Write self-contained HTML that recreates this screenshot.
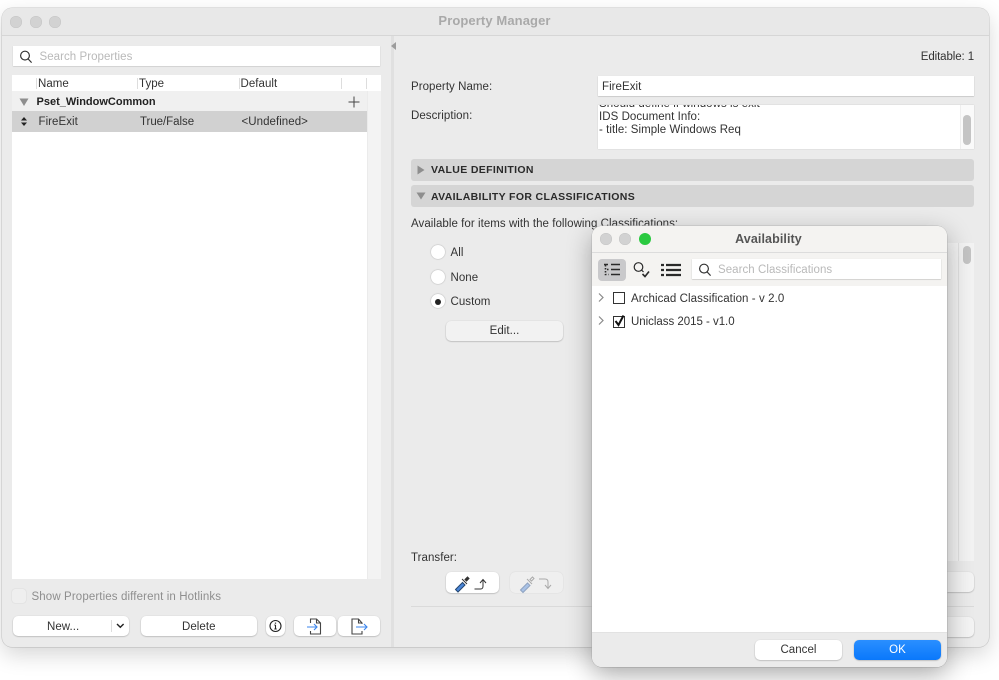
<!DOCTYPE html>
<html><head><meta charset="utf-8"><style>
html,body{margin:0;padding:0;background:#fff}
body{width:999px;height:680px;position:relative;overflow:hidden;font-family:"Liberation Sans",sans-serif;font-size:11.5px;color:#333;letter-spacing:.05px;filter:blur(.35px)}
div,span{position:absolute;box-sizing:border-box}
svg{position:absolute;overflow:visible}
.t{white-space:nowrap;line-height:14px;margin-top:1px}
.btn{background:#fff;border-radius:5px;box-shadow:0 .5px 1.5px rgba(0,0,0,.3);text-align:center;line-height:22px}
.dot{width:12px;height:12px;border-radius:50%;background:#d2d2d2;box-shadow:inset 0 0 0 .5px #c4c4c4}
.bar{background:#d5d5d5;border-radius:3px;left:411px;width:563px;height:22px}
.bt{font-weight:bold;left:431px;white-space:nowrap;line-height:14px;letter-spacing:.35px;font-size:10.5px;color:#2a2a2a}
.rad{width:14px;height:14px;border-radius:50%;background:#fff;left:431px;box-shadow:0 0 1.5px rgba(0,0,0,.35)}
</style></head><body>
<!-- main window -->
<div style="left:2px;top:8px;width:987px;height:639px;background:#ebebeb;border-radius:10px;box-shadow:0 8px 22px rgba(0,0,0,.16),0 0 0 .5px #cfcfcf"></div>
<div style="left:2px;top:8px;width:987px;height:28px;background:#e8e8e8;border-radius:10px 10px 0 0;border-bottom:1px solid #d6d6d6"></div>
<div class="dot" style="left:10px;top:16px"></div><div class="dot" style="left:30px;top:16px"></div><div class="dot" style="left:49px;top:16px"></div>
<div class="t" style="left:0;width:989px;text-align:center;top:13px;font-weight:bold;font-size:13px;color:#a9a9a9;letter-spacing:.1px">Property Manager</div>

<!-- left panel -->
<div style="left:13px;top:46px;width:367px;height:20px;background:#fff;box-shadow:0 .5px 1px rgba(0,0,0,.2)"></div>
<svg style="left:19px;top:50px" width="14" height="14" fill="none" stroke="#333" stroke-width="1.2"><circle cx="6" cy="5.6" r="4.4"/><path d="M9.2 9l3.400 3.600"/></svg>
<div class="t" style="left:39.500px;top:49px;color:#b9b9b9">Search Properties</div>

<div style="left:12px;top:75px;width:369px;height:16px;background:#fff"></div>
<div style="left:36px;top:78px;width:1px;height:11px;background:#ddd"></div>
<div style="left:137px;top:78px;width:1px;height:11px;background:#ddd"></div>
<div style="left:239px;top:78px;width:1px;height:11px;background:#ddd"></div>
<div style="left:341px;top:78px;width:1px;height:11px;background:#ddd"></div>
<div style="left:366px;top:78px;width:1px;height:11px;background:#ddd"></div>
<div class="t" style="left:38px;top:76px">Name</div>
<div class="t" style="left:139px;top:76px">Type</div>
<div class="t" style="left:240.500px;top:76px">Default</div>

<div style="left:12px;top:91px;width:355px;height:488px;background:#fff"></div>
<div style="left:368px;top:91px;width:13px;height:488px;background:#f3f3f3"></div>
<div style="left:12px;top:91px;width:355px;height:20px;background:#f0f0f0"></div>
<svg style="left:19px;top:98px" width="11" height="9"><path d="M0.500 0.500H9.500L5 8z" fill="#8e8e8e"/></svg>
<div style="left:36.500px;top:95px;font-weight:bold;font-size:11px;color:#222;letter-spacing:0;white-space:nowrap;line-height:14px">Pset_WindowCommon</div>
<svg style="left:348px;top:96px" width="12" height="12" stroke="#444" stroke-width="1"><path d="M6 .5v11M.5 6h11"/></svg>
<div style="left:12px;top:111px;width:355px;height:21px;background:#d1d1d1"></div>
<svg style="left:20px;top:117px" width="8" height="9" fill="#222"><path d="M4 0L7 3.500H1zM4 9L1 5.500H7z"/></svg>
<div class="t" style="left:38.500px;top:114px">FireExit</div>
<div class="t" style="left:140px;top:114px;letter-spacing:-.05px">True/False</div>
<div class="t" style="left:241.500px;top:114px">&lt;Undefined&gt;</div>

<div style="left:12px;top:589px;width:14px;height:14px;background:#efefef;border-radius:3px;box-shadow:0 0 1px rgba(0,0,0,.2)"></div>
<div class="t" style="left:31.500px;top:589px;color:#8e8e8e;letter-spacing:.12px">Show Properties different in Hotlinks</div>

<div class="btn" style="left:13px;top:616px;width:116px;height:20px"></div>
<div class="t" style="left:47px;top:619px">New...</div>
<div style="left:111px;top:620px;width:1px;height:12px;background:#ddd"></div>
<svg style="left:116px;top:623px" width="9" height="6" fill="none" stroke="#222" stroke-width="1.400"><path d="M1 1l3.300 3.300L7.600 1"/></svg>
<div class="btn" style="left:141px;top:616px;width:116px;height:20px"></div>
<div class="t" style="left:182px;top:619px">Delete</div>
<div class="btn" style="left:266px;top:616px;width:19px;height:20px;border-radius:6px"></div>
<svg style="left:269px;top:619px" width="14" height="14" fill="none" stroke="#222" stroke-width="1.100"><circle cx="6.500" cy="7" r="5.500"/><path d="M6.500 6v4M5.300 10h2.400M5.300 6h1.200" /><path d="M6.500 3.600v1.100" stroke-width="1.300"/></svg>
<div class="btn" style="left:294px;top:616px;width:42px;height:20px"></div>
<svg style="left:307px;top:618px" width="18" height="17" fill="none" stroke="#444" stroke-width="1.100"><path d="M3.500 5V1h6l4 4v11H3.500v-3M9.500 1v4h4"/><path d="M0 9h10M7 6l3 3-3 3" stroke="#3b86ee"/></svg>
<div class="btn" style="left:338px;top:616px;width:42px;height:20px"></div>
<svg style="left:351px;top:618px" width="18" height="17" fill="none" stroke="#444" stroke-width="1.100"><path d="M11 6V5L7.500 1H1v15h10v-3M7.500 1v4H11"/><path d="M5 9h11M13 6l3 3-3 3" stroke="#3b86ee"/></svg>

<!-- divider -->
<div style="left:391px;top:36px;width:3px;height:611px;background:#e0e0e0"></div>
<svg style="left:390px;top:42px" width="6" height="9"><path d="M6 0v8L1 4z" fill="#9c9c9c"/></svg>

<!-- right panel -->
<div class="t" style="right:25px;top:49px;letter-spacing:-.1px">Editable: 1</div>
<div class="t" style="left:411px;top:79px">Property Name:</div>
<div style="left:598px;top:76px;width:376px;height:20px;background:#fff;box-shadow:0 .5px 1px rgba(0,0,0,.25)"></div>
<div class="t" style="left:602px;top:79px">FireExit</div>
<div class="t" style="left:411px;top:108px">Description:</div>
<div style="left:598px;top:105px;width:376px;height:44px;background:#fff;overflow:hidden;box-shadow:0 0 1px rgba(0,0,0,.2)">
<div class="t" style="left:1px;top:-9px">Should define if windows is exit</div>
<div class="t" style="left:1px;top:4px">IDS Document Info:</div>
<div class="t" style="left:1px;top:17px">- title: Simple Windows Req</div>
<div style="left:362px;top:0;width:14px;height:44px;background:#fafafa;border-left:1px solid #eee"></div>
<div style="left:365px;top:10px;width:8px;height:30px;background:#c4c4c4;border-radius:4px"></div>
</div>

<div class="bar" style="top:159px"></div>
<svg style="left:417px;top:165px" width="9" height="10"><path d="M.5 .5L7.500 5 .5 9.500z" fill="#8e8e8e"/></svg>
<div class="bt" style="top:163px">VALUE DEFINITION</div>
<div class="bar" style="top:185px"></div>
<svg style="left:416px;top:192px" width="10" height="8"><path d="M.5 .5H9.500L5 7.500z" fill="#8e8e8e"/></svg>
<div class="bt" style="top:190px">AVAILABILITY FOR CLASSIFICATIONS</div>
<div class="t" style="left:411px;top:216px">Available for items with the following Classifications:</div>

<div class="rad" style="top:245px"></div><div class="t" style="left:450.500px;top:245px">All</div>
<div class="rad" style="top:270px"></div><div class="t" style="left:450.500px;top:270px">None</div>
<div class="rad" style="top:294px"></div><div style="left:435px;top:298.500px;width:6px;height:6px;border-radius:50%;background:#222"></div><div class="t" style="left:450.500px;top:294px">Custom</div>
<div class="btn" style="left:446px;top:321px;width:117px;height:20px;background:#f2f2f2;line-height:21px">Edit...</div>

<div style="left:930px;top:243px;width:44px;height:318px;background:#f5f5f5"></div>
<div style="left:958px;top:243px;width:16px;height:318px;background:#f3f3f3;border-left:1px solid #e2e2e2"></div>
<div style="left:963px;top:246px;width:8px;height:18px;background:#c4c4c4;border-radius:4px"></div>

<div class="t" style="left:411px;top:550px">Transfer:</div>
<div class="btn" style="left:446px;top:572px;width:53px;height:21px"></div>
<svg style="left:454px;top:574px" width="40" height="18" fill="none" stroke="#333" stroke-width="1"><path d="M1.500 15.500l7-7 2.500 2.500-7 7z" fill="#4a86d8" stroke="#24466f"/><path d="M8 5l5 5M11 5.500l2.500-2.500 1.500 1.500-2.500 2.500z" fill="#333"/><path d="M20.500 15h6c2 0 2.500-1 2.500-3V6M26 9l3-3.500L32 9"/></svg>
<div class="btn" style="left:510px;top:572px;width:53px;height:21px;background:#efefef;box-shadow:0 0 1px rgba(0,0,0,.15)"></div>
<svg style="left:519px;top:574px" width="40" height="18" fill="none" stroke="#aaa" stroke-width="1"><path d="M1.500 16l7-7 2.500 2.500-7 7z" fill="#a9c2e6" stroke="#8fa3c0"/><path d="M8 5l5 5M11 5.500l2.500-2.500 1.500 1.500-2.500 2.500z"/><path d="M20 5h6c2 0 3 1 3 3v6M26 11l3 3.500L32 11"/></svg>
<div class="btn" style="left:930px;top:572px;width:44px;height:20px;background:#f4f4f4"></div>
<div style="left:411px;top:606px;width:563px;height:1px;background:#dadada"></div>
<div class="btn" style="left:930px;top:617px;width:44px;height:20px;background:#f4f4f4"></div>

<!-- dialog -->
<div style="left:592px;top:226px;width:355px;height:441px;background:#fff;border-radius:10px;box-shadow:0 8px 26px rgba(0,0,0,.32),0 0 0 .5px #c8c8c8;overflow:hidden">
<div style="left:0;top:0;width:355px;height:27px;background:#f4f3f1;border-bottom:1px solid #dcdcdc"></div>
<div style="left:0;top:27px;width:355px;height:33px;background:#f4f3f1"></div>
<div style="left:0;top:406px;width:355px;height:35px;background:#ebebeb;border-top:1px solid #e2e2e2"></div>
</div>
<div class="dot" style="left:600px;top:233px"></div><div class="dot" style="left:619px;top:233px"></div><div class="dot" style="left:639px;top:233px;background:#2ac940;box-shadow:none"></div>
<div class="t" style="left:591px;width:355px;text-align:center;top:231px;font-weight:bold;font-size:12.500px;color:#555;letter-spacing:.1px">Availability</div>
<div style="left:598px;top:259px;width:28px;height:22px;background:#c9c9cb;border-radius:4px"></div>
<svg style="left:604px;top:263px" width="17" height="14" fill="none" stroke="#2a2a2a" stroke-width="1.600"><path d="M0 1.500h4M7 1.500h9M7 6.500h9M7 11.500h9" /><path d="M1.500 2v9.500h3" stroke-dasharray="1.500 1.500"/><path d="M3 6.500h1.500"/></svg>
<svg style="left:633px;top:261px" width="18" height="18" fill="none" stroke="#2a2a2a" stroke-width="1.200"><circle cx="5.500" cy="6" r="4.300"/><path d="M8.500 9l2 2"/><path d="M9.500 13l2.500 2.500 4-5" stroke-width="1.600"/></svg>
<svg style="left:661px;top:263px" width="20" height="14" stroke="#2a2a2a" stroke-width="2.200"><path d="M5 2h15M5 7h15M5 12h15M0 2h3M0 7h3M0 12h3"/></svg>
<div style="left:692px;top:259px;width:249px;height:20px;background:#fff;box-shadow:0 .5px 1px rgba(0,0,0,.25)"></div>
<svg style="left:698px;top:263px" width="14" height="14" fill="none" stroke="#333" stroke-width="1.200"><circle cx="6" cy="5.600" r="4.400"/><path d="M9.200 9l3.400 3.600"/></svg>
<div class="t" style="left:718px;top:262px;color:#b9b9b9">Search Classifications</div>
<svg style="left:598px;top:293px" width="6" height="9" fill="none" stroke="#8a8a8a" stroke-width="1.200"><path d="M1 .5l4 4-4 4"/></svg>
<div style="left:613px;top:292px;width:11.500px;height:12px;border:1.300px solid #333;background:#fff"></div>
<div class="t" style="left:631px;top:291px;letter-spacing:.08px">Archicad Classification - v 2.0</div>
<svg style="left:598px;top:316px" width="6" height="9" fill="none" stroke="#8a8a8a" stroke-width="1.200"><path d="M1 .5l4 4-4 4"/></svg>
<div style="left:613px;top:316px;width:11.500px;height:12px;border:1.300px solid #333;background:#fff"></div>
<svg style="left:613px;top:314px" width="13" height="13" fill="none" stroke="#111" stroke-width="2"><path d="M2.500 7l3 4L10.500 1.500"/></svg>
<div class="t" style="left:631px;top:314px;letter-spacing:-.03px">Uniclass 2015 - v1.0</div>
<div class="btn" style="left:755px;top:640px;width:87px;height:20px;line-height:21px">Cancel</div>
<div class="btn" style="left:854px;top:640px;width:87px;height:20px;line-height:21px;background:linear-gradient(#2a8fff,#0a78fb);color:#fff">OK</div>
</body></html>
